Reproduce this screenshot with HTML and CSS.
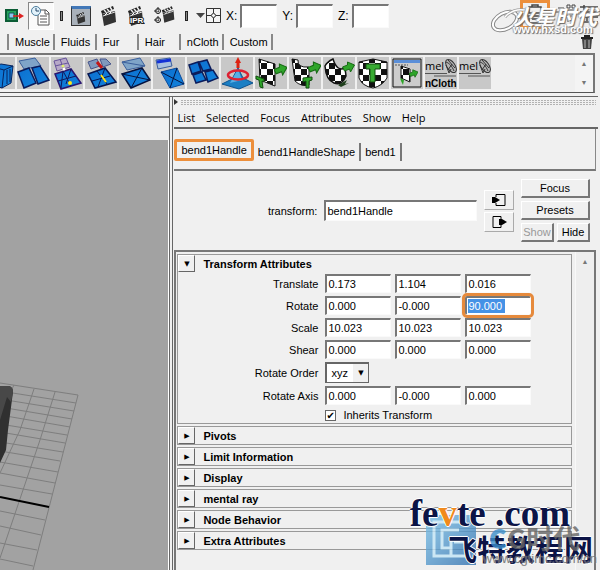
FILE: index.html
```html
<!DOCTYPE html>
<html lang="en">
<head>
	<meta charset="utf-8">
	<title>Attribute Editor</title>

	<link rel="stylesheet" href="styles.css">
</head>
<body>

	<!-- Shared icon parts -->
	<svg class="defs" width="0" height="0" aria-hidden="true">
		<defs>
			<linearGradient id="blue" x1="0" y1="0" x2="1" y2="1">
				<stop offset="0" stop-color="#0c6fd0"/>
				<stop offset="1" stop-color="#1283dc"/>
			</linearGradient>
			<linearGradient id="logo-blue" x1="0" y1="0" x2="1" y2="1">
				<stop offset="0" stop-color="#7fc4ea"/>
				<stop offset="1" stop-color="#2f6fae"/>
			</linearGradient>
			<pattern id="check" width="12" height="12" patternUnits="userSpaceOnUse">
				<rect width="12" height="12" fill="#fff"/>
				<path d="M0 0h6v6H0zM6 6h6v6H6z" fill="#111"/>
			</pattern>
			<symbol id="clapper" viewBox="0 0 18 20">
				<path d="M2 8l13-3 1 11-12 4z" fill="#333"/>
				<path d="M1 5L13 0l1 3L2 8z" fill="#222"/>
				<path d="M4 4l2 2M7 3l2 2M10 1l2 3" stroke="#eee" stroke-width="1.5"/>
				<path d="M3 10l12-4" stroke="#ddd"/>
				<path d="M5 9l2-2M9 8l2-2" stroke="#fff"/>
			</symbol>
			<symbol id="green-arrow" viewBox="0 0 12 12">
				<path d="M0 6l5-2V1l7 3-4 7-1-3-5 2z" fill="#2fa52a" stroke="#176a14"/>
			</symbol>
			<symbol id="mel" viewBox="0 0 32 32">
				<path d="M0 16.5h22M9 19h22" stroke="#555"/>
				<ellipse cx="26" cy="9" rx="4" ry="7.500" transform="rotate(-35 26 9)" fill="#b5b5b5" stroke="#333"/>
				<path d="M21 5c3 1 6 4 8 9M23 3c2 3 5 5 7 8M23 13l4-6M21 8l3 8 2-4" fill="none" stroke="#333"/>
			</symbol>
		</defs>
	</svg>

	<header class="toolbar">
		<button class="tool" aria-label="Output connections">
			<svg width="20" height="16" viewBox="0 0 20 16"><path d="M1 2h11v11H1z" fill="#24a35d" stroke="#0b5c35" stroke-width="2"/><path d="M4 5h5v5H4z" fill="#8cc6ef" stroke="#155"/><path d="M8 8h8" stroke="#d22" stroke-width="1.500"/><path d="M14 5l5 3-5 3z" fill="#d22"/></svg>
		</button>
		<button class="tool tool-pressed" aria-label="Construction history">
			<svg width="20" height="22" viewBox="0 0 20 22"><path d="M7 5h8l3 3v12H7z" fill="#fff" stroke="#555"/><path d="M14 5v4h4M9 11h7M9 14h7M9 17h7" fill="none" stroke="#555"/><circle cx="5" cy="6" r="4.500" fill="#e2f2fb" stroke="#4c7c9c"/><path d="M5 3v3h3" fill="none" stroke="#246"/></svg>
		</button>
		<span class="grip"></span>
		<button class="tool tool-framed" aria-label="Render view">
			<svg width="16" height="14"><use href="#clapper"/></svg>
		</button>
		<button class="tool" aria-label="Render">
			<svg width="18" height="20"><use href="#clapper"/></svg>
		</button>
		<button class="tool" aria-label="IPR render">
			<svg width="18" height="20" viewBox="0 0 18 20"><use href="#clapper"/><text x="3" y="17" class="ipr">IPR</text></svg>
		</button>
		<button class="tool" aria-label="Render settings">
			<svg width="22" height="20" viewBox="0 0 22 20"><use href="#clapper" x="7" width="15" height="17"/><circle cx="4" cy="5" r="2.500" fill="#ddd" stroke="#222"/><circle cx="4" cy="14" r="2.500" fill="#ddd" stroke="#222"/><path d="M4 1v8M0 5h8M4 10v8M0 14h8" stroke="#222" stroke-dasharray="1 1"/></svg>
		</button>
		<span class="grip"></span>
		<button class="tool tool-field" aria-label="Input field mode">
			<svg width="26" height="18" viewBox="0 0 26 18"><path d="M0 6h9l-4.500 5z" fill="#444"/><path d="M10.500 1.500h14v14h-14z" fill="#f4f4f4" stroke="#333"/><path d="M17.500 1v5M17.500 11v5M10 8.500h5M20 8.500h5" stroke="#333"/><circle cx="17.500" cy="8.500" r="2" fill="none" stroke="#333"/></svg>
		</button>
		<label class="coord">X: <input type="text"></label>
		<label class="coord">Y: <input type="text"></label>
		<label class="coord">Z: <input type="text"></label>
		<div class="panel-toggles">
			<button class="toggle toggle-marked" aria-label="Attribute editor">
				<svg width="24" height="22" viewBox="0 0 24 22"><path d="M0 6h6M18 6h6M6 3h12v6H6zM9 3V1h6v2M3 12h18M6 12v7h12M9 15h9" fill="none" stroke="#444" stroke-width="1.500"/></svg>
			</button>
			<button class="toggle" aria-label="Tool settings">
				<svg width="22" height="20" viewBox="0 0 22 20"><path d="M0 8h9M4 4h6v4M13 1h3v3h-3zM18 1h3v3h-3zM13 6h8M4 12h14M8 15v4M14 11v7" fill="none" stroke="#444"/></svg>
			</button>
			<button class="toggle" aria-label="Channel box">
				<svg width="18" height="20" viewBox="0 0 18 20"><path d="M0 3h18M4 1v5M0 8h18M12 6v5M2 13h16M7 11v6M3 18h15" fill="none" stroke="#444" stroke-width="1.500"/></svg>
			</button>
		</div>
		<!-- Studio stamp -->
		<div class="stamp-top">
			<svg width="36" height="26" viewBox="0 0 36 26"><ellipse cx="14" cy="14" rx="13" ry="8" transform="rotate(-28 14 14)" fill="none" stroke="#888" stroke-width="4"/><ellipse cx="14" cy="14" rx="13" ry="8" transform="rotate(-28 14 14)" fill="none" stroke="#fff" stroke-width="2"/><path d="M14 10Q22 1 34 3" fill="none" stroke="#999" stroke-width="3"/><path d="M14 10Q22 1 34 3" fill="none" stroke="#fff" stroke-width="1.500"/></svg>
			<div class="stamp-text">
				<span class="stamp-name" lang="zh">火星时代</span>
				<span class="stamp-url">www.hxsd.com</span>
			</div>
		</div>
	</header>

	<nav class="shelf-tabs">
		<button class="shelf-tab shelf-tab-cut" aria-label="Previous shelf"></button>
		<button class="shelf-tab">Muscle</button>
		<button class="shelf-tab">Fluids</button>
		<button class="shelf-tab">Fur</button>
		<button class="shelf-tab">Hair</button>
		<button class="shelf-tab">nCloth</button>
		<button class="shelf-tab">Custom</button>
		<button class="trash" aria-label="Delete shelf item">
			<svg width="14" height="16" viewBox="0 0 14 16"><path d="M2 5h10l-1 10H3z" fill="#444"/><path d="M1 3h12v2H1zM4 1h6v2H4z" fill="#222"/><path d="M5 6v8M9 6v8" stroke="#bbb"/></svg>
		</button>
	</nav>

	<section class="shelf">
		<div class="shelf-items">
			<button class="shelf-item" aria-label="Cube">
				<svg viewBox="0 0 32 32"><path d="M10 10l8-3 12 2-2 17-9 5-9-3z" fill="url(#blue)" stroke="#06235e"/><path d="M10 10l11 3 9-4M21 13l-2 18M13 15v12M16 15v13M24 13v14M27 12v13" fill="none" stroke="#06235e"/></svg>
			</button>
			<button class="shelf-item" aria-label="Planar">
				<svg viewBox="0 0 32 32"><path d="M2 4l16-3 6 8-17 3z" fill="#7fa4c8" stroke="#3b5f9b"/><path d="M1 15l11-4 7 15-12 5z" fill="url(#blue)" stroke="#0a1c5c" stroke-width="1.500"/><path d="M15 11l8-2 9 14-11 4z" fill="url(#blue)" stroke="#0a1c5c" stroke-width="1.500"/></svg>
			</button>
			<button class="shelf-item" aria-label="Merge vertices">
				<svg viewBox="0 0 32 32"><path d="M3 4l12-3 4 9-13 4zM9 2l4 11M4 9l13-3" fill="#b7a9c8" stroke="#67539a"/><path d="M4 17l16-5 10 14-20 6z" fill="url(#blue)" stroke="#2b1670" stroke-width="1.500"/><path d="M12 14l8 15M7 24l18-5M12 14l-2 17M20 12l-5 15" stroke="#10195c"/><circle cx="12" cy="9" r="1.500" fill="#dff06d"/><circle cx="13" cy="12" r="1.500" fill="#fff"/><circle cx="19" cy="26" r="2" fill="#ffe51a"/></svg>
			</button>
			<button class="shelf-item" aria-label="Sew edges">
				<svg viewBox="0 0 32 32"><path d="M3 5l9-3 3 7-9 3zM15 2l6 0 5 5-8 3z" fill="#8099bd" stroke="#48568c"/><path d="M12 5l5 6" stroke="#c31616" stroke-width="3"/><path d="M3 17l17-6 11 14-21 6z" fill="url(#blue)" stroke="#07164f" stroke-width="1.500"/><path d="M12 14l10 13M7 24l18-5M20 11l-7 19" stroke="#07164f"/><path d="M16 18l5 7" stroke="#ffe51a" stroke-width="2"/></svg>
			</button>
			<button class="shelf-item" aria-label="Split polygon">
				<svg viewBox="0 0 32 32"><path d="M3 5l18-4 5 8-18 4zM3 5l23 4" fill="#7fa4c8" stroke="#3b5f9b"/><path d="M3 17l20-6 8 12-19 8z" fill="url(#blue)" stroke="#06133f" stroke-width="1.500"/><path d="M3 17l28 6M23 11L12 31" stroke="#06133f"/></svg>
			</button>
			<button class="shelf-item" aria-label="Extrude">
				<svg viewBox="0 0 32 32"><path d="M3 3l14-2 2 8-14 3z" fill="#a9c0e0" stroke="#3b5f9b"/><path d="M4 5l14-2" stroke="#1431d6" stroke-width="3"/><path d="M8 15l16-4 7 16-14 4z" fill="url(#blue)" stroke="#0b4a9c"/><path d="M8 15l23 12M24 11l-7 20" stroke="#06133f"/></svg>
			</button>
			<button class="shelf-item" aria-label="Detach">
				<svg viewBox="0 0 32 32"><path d="M2 8l9-3 3 9-9 3zM12 5l8-2 4 9-8 2zM6 18l9-3 4 8-10 3zM18 15l8-2 5 8-10 4z" fill="url(#blue)" stroke="#0a1c5c" stroke-width="1.500"/></svg>
			</button>
			<button class="shelf-item" aria-label="Soft modification">
				<svg viewBox="0 0 32 32"><path d="M1 27l10-5 6-11 5 10 10 5-14 6z" fill="#1b7fc4" stroke="#0f548f"/><path d="M9 26l8-14 4 11z" fill="#55aee5"/><ellipse cx="17" cy="18" rx="10" ry="4.500" fill="none" stroke="#dd2032" stroke-width="2.500"/><path d="M17 11V5" stroke="#d21" stroke-width="3"/><path d="M17 0l-3 6h6z" fill="#d21"/></svg>
			</button>
			<button class="shelf-item" aria-label="Planar mapping">
				<svg viewBox="0 0 32 32"><path d="M4 2l16 5v22L5 23z" fill="url(#check)" stroke="#111"/><use href="#green-arrow" x="19" y="6" width="13" height="13"/><path d="M1 19l8 3v3l-2-1 1 7-3-1-1-7-3-1z" fill="#2fa52a" stroke="#124f10"/></svg>
			</button>
			<button class="shelf-item" aria-label="Cylindrical mapping">
				<svg viewBox="0 0 32 32"><path d="M3 2l6 1q-1 8 11 7v18q-8 2-14-4z" fill="url(#check)" stroke="#111"/><use href="#green-arrow" x="19" y="4" width="13" height="13"/><path d="M14 21l9-1v3l-3 1v7h-3v-7l-3 1z" fill="#2fa52a" stroke="#124f10"/></svg>
			</button>
			<button class="shelf-item" aria-label="Spherical mapping">
				<svg viewBox="0 0 32 32"><path d="M10 2Q4 5 2 9q1 14 9 17 8 3 12-7l-1-8q-8 4-12-9z" fill="url(#check)" stroke="#111" stroke-width="1.500"/><use href="#green-arrow" x="19" y="4" width="13" height="12"/><path d="M15 28l9-5-2 4 4-1-8 4z" fill="#1f3f1c"/></svg>
			</button>
			<button class="shelf-item" aria-label="Automatic mapping">
				<svg viewBox="0 0 32 32"><path d="M2 5l14-3 14 3v16q-5 8-14 10Q5 29 2 21z" fill="url(#check)" stroke="#111"/><path d="M9 7h14v5h-5v13h-5V12H9z" fill="#38ab32" stroke="#124f10"/></svg>
			</button>
			<button class="shelf-item" aria-label="UV texture editor">
				<svg viewBox="0 0 32 32"><path d="M2 2h28v28H2z" fill="#ccc" stroke="#111"/><path d="M3 3h26v3H3z" fill="#5b8fd8"/><path d="M4 8h13" stroke="#555" stroke-dasharray="2 1"/><path d="M10 9l9 3v13l-9-4z" fill="url(#check)" stroke="#111"/><use href="#green-arrow" x="18" y="12" width="9" height="9"/><path d="M9 21l4 2-1 5-2-4z" fill="#2fa52a"/></svg>
			</button>
			<button class="shelf-item" aria-label="MEL script nCloth">
				<svg viewBox="0 0 32 32"><use href="#mel"/><text x="0" y="13" class="mel">mel</text><text x="0" y="30" class="mel-name">nCloth</text></svg>
			</button>
			<button class="shelf-item" aria-label="MEL script">
				<svg viewBox="0 0 32 32"><use href="#mel"/><text x="0" y="13" class="mel">mel</text></svg>
			</button>
		</div>
		<div class="shelf-scroll">
			<button aria-label="Scroll shelf up">▲</button>
			<button aria-label="Scroll shelf down">▼</button>
		</div>
	</section>

	<main class="workspace">
		<section class="view">
			<div class="view-bar"></div>
			<div class="view-head"></div>
			<svg class="scene" viewBox="0 140 169 430" preserveAspectRatio="xMinYMax slice">
				<g fill="none" stroke="#7e7e7e">
					<path d="M78 395L33 570M55 392L40 440 23 490 0 558M34 389L20 430 0 473M14 385l-4 8"/>
					<path d="M78 395L0 383M76 403L0 391M74 411L0 399M72 419L0 407M70 427L0 415M67 435L0 424M65 443L0 432M63 452L0 442M60 461L0 451M58 472L0 462M55 483L0 473M52 494L0 485M45 520L0 511M41 535L0 526M37 550L0 543M33 566L0 559"/>
				</g>
				<path d="M0 497l49 10" stroke="#000" stroke-width="2"/>
				<path d="M0 386h9q4 1 4 6L8 430l-2 20-6 13z" fill="#303030"/>
				<path d="M0 386h9q4 1 4 6l-2 10-4-5-7 23z" fill="#484848"/>
			</svg>
		</section>

		<section class="editor">
			<div class="drag-bar"><span class="dots"></span></div>
			<nav class="menu">
				<button>List</button>
				<button>Selected</button>
				<button>Focus</button>
				<button>Attributes</button>
				<button>Show</button>
				<button>Help</button>
			</nav>

			<div class="node-tabs">
				<button class="node-tab node-tab-current">bend1Handle</button>
				<button class="node-tab">bend1HandleShape</button>
				<button class="node-tab">bend1</button>
			</div>

			<div class="node-head">
				<label for="node">transform:</label>
				<input type="text" id="node" value="bend1Handle">
				<div class="io">
					<button aria-label="Go to input">
						<svg width="16" height="14" viewBox="0 0 16 14"><path d="M5 4V1.500h9v11H5V10" fill="none" stroke="#000"/><path d="M1 4h3l5 3-5 3H1z"/></svg>
					</button>
					<button aria-label="Go to output">
						<svg width="16" height="14" viewBox="0 0 16 14"><path d="M10 4V1.500H2v11h8V10" fill="none" stroke="#000"/><path d="M8 4h3l5 3-5 3H8z"/></svg>
					</button>
				</div>
				<div class="actions">
					<button class="wide">Focus</button>
					<button class="wide">Presets</button>
					<button disabled>Show</button>
					<button>Hide</button>
				</div>
			</div>

			<div class="frame">
				<div class="sections">
					<section class="group group-open">
						<h2><button aria-label="Collapse">▼</button>Transform Attributes</h2>
						<div class="fields">
							<label for="tx">Translate</label>
							<input type="text" id="tx" value="0.173">
							<input type="text" aria-label="Translate Y" value="1.104">
							<input type="text" aria-label="Translate Z" value="0.016">

							<label for="rx">Rotate</label>
							<input type="text" id="rx" value="0.000">
							<input type="text" aria-label="Rotate Y" value="-0.000">
							<input type="text" class="marked" aria-label="Rotate Z" value="90.000">

							<label for="sx">Scale</label>
							<input type="text" id="sx" value="10.023">
							<input type="text" aria-label="Scale Y" value="10.023">
							<input type="text" aria-label="Scale Z" value="10.023">

							<label for="shx">Shear</label>
							<input type="text" id="shx" value="0.000">
							<input type="text" aria-label="Shear XZ" value="0.000">
							<input type="text" aria-label="Shear YZ" value="0.000">

							<label for="order">Rotate Order</label>
							<div class="pick">
								<select id="order">
									<option>xyz</option>
									<option>yzx</option>
									<option>zxy</option>
								</select>
								<span class="pick-arrow">▼</span>
							</div>

							<label for="ax">Rotate Axis</label>
							<input type="text" id="ax" value="0.000">
							<input type="text" aria-label="Rotate Axis Y" value="-0.000">
							<input type="text" aria-label="Rotate Axis Z" value="0.000">

							<label class="inherit"><input type="checkbox" checked>Inherits Transform</label>
						</div>
					</section>
					<section class="group"><h2><button aria-label="Expand">▶</button>Pivots</h2></section>
					<section class="group"><h2><button aria-label="Expand">▶</button>Limit Information</h2></section>
					<section class="group"><h2><button aria-label="Expand">▶</button>Display</h2></section>
					<section class="group"><h2><button aria-label="Expand">▶</button>mental ray</h2></section>
					<section class="group"><h2><button aria-label="Expand">▶</button>Node Behavior</h2></section>
					<section class="group"><h2><button aria-label="Expand">▶</button>Extra Attributes</h2></section>
				</div>
				<div class="scrollbar"><button aria-label="Scroll up">▲</button></div>
			</div>
		</section>
	</main>

	<!-- Site stamps over the lower right corner -->
	<svg class="stamp-logo" width="52" height="52" viewBox="0 0 52 52"><path d="M1 1h50v50H1z" fill="url(#logo-blue)"/><path d="M41 8H9v34h33V28H29M34 16H17v18h9M26 22v20" fill="none" stroke="#c4e5f6" stroke-width="3"/></svg>
	<div class="stamp-fevte">fe<span>v</span>te .com</div>
	<div class="stamp-site" lang="zh">飞特教程网</div>
	<div class="stamp-cg">
		<span class="cg-name" lang="zh"><b>C</b>G时代</span>
		<span class="cg-url">www.cgtimc.com/cn</span>
	</div>

</body>
</html>
```
FILE: styles.css
```css
* {
	box-sizing: border-box;
}

body {
	margin: 0;
	min-height: 100vh;
	display: flex;
	flex-direction: column;
	position: relative;
	overflow: hidden;
	background: #f0f0f0;
	color: #000;
	font: 11px/14px "Liberation Sans", sans-serif;
}

button,
input,
select {
	margin: 0;
	padding: 0;
	border: 0;
	background: none;
	color: inherit;
	font: inherit;
}

input[type="text"] {
	min-width: 0;
	padding: 0 1px;
	border: 1px solid #fafafa;
	border-top: 2px solid #777;
	border-left: 2px solid #777;
	background: #fff;
}

svg {
	display: block;
	flex: none;
}

.defs {
	position: absolute;
}

/* Status line */
.toolbar {
	display: flex;
	align-items: center;
	height: 31px;
	padding: 0 2px 0 5px;
	position: relative;
}

.tool {
	margin-right: 9px;
}

.tool:first-child {
	margin-right: 3px;
}

.tool-pressed {
	padding: 2px;
	margin-right: 6px;
	border: 1px solid #fff;
	border-top-color: #888;
	border-left-color: #888;
	background: #fafafa;
}

.tool-framed {
	width: 20px;
	height: 20px;
	padding: 3px 1px 1px;
	border: 1px solid #333;
	border-top: 3px solid #4278b8;
	background: #a9b1ba;
}

.tool-framed svg {
	height: 12px;
}

.tool-field {
	margin-right: 4px;
}

.grip {
	width: 3px;
	height: 10px;
	margin-right: 8px;
	border: 1px solid #222;
	background: #888;
}

.coord {
	display: flex;
	align-items: center;
	gap: 3px;
	margin-right: 5px;
	font-size: 12px;
}

.coord input {
	width: 37px;
	height: 24px;
}

.panel-toggles {
	display: flex;
	align-items: flex-start;
	align-self: flex-start;
	gap: 4px;
	height: 28px;
	margin-left: auto;
}

.toggle {
	padding-top: 4px;
}

.toggle-marked {
	height: 29px;
	padding: 1px 0;
	border: 3px solid #ec8f3c;
}

.ipr {
	fill: #fff;
	stroke: #222;
	stroke-width: 2px;
	paint-order: stroke;
	font: bold 8px "Liberation Sans", sans-serif;
}

.stamp-top {
	display: flex;
	position: absolute;
	top: 7px;
	right: 3px;
	color: #fff;
	pointer-events: none;
}

.stamp-text {
	display: flex;
	flex-direction: column;
	margin-left: -14px;
	text-shadow: 1px 1px 1px #666, -1px 0 1px #aaa;
}

.stamp-name {
	font: italic bold 21px/18px "Noto Sans CJK SC", sans-serif;
}

.stamp-url {
	font: bold 11px/9px "Liberation Sans", sans-serif;
}

/* Shelf */
.shelf-tabs {
	display: flex;
	align-items: center;
	height: 22px;
	padding-right: 6px;
}

.shelf-tab {
	min-width: 42px;
	height: 16px;
	padding: 0 3px 0 6px;
	border-right: 2px solid #888;
	text-align: left;
}

.shelf-tab-cut {
	min-width: 9px;
	padding: 0;
}

.trash {
	margin-left: auto;
}

.shelf {
	display: flex;
	height: 40px;
	margin-right: 5px;
	border: 2px solid #777;
	border-left: 0;
	border-bottom: 1px solid #555;
}

.shelf-items {
	display: flex;
	flex: 1;
	gap: 2px;
	padding-top: 2px;
	overflow: hidden;
}

.shelf-item {
	flex: none;
	width: 32px;
	height: 32px;
	background: #c8c8c8;
}

.shelf-item svg {
	overflow: visible;
}

.shelf-item:first-child {
	margin-left: -17px;
}

.mel {
	font: 11px "Open Sans", sans-serif;
}

.mel-name {
	font: bold 10px "Liberation Sans", sans-serif;
}

.shelf-scroll {
	display: flex;
	flex-direction: column;
	justify-content: space-around;
	width: 18px;
	background: #f4f4f4;
	color: #777;
	font-size: 7px;
}

/* Viewport and attribute editor */
.workspace {
	flex: 1;
	display: grid;
	grid-template-columns: 29% 1fr;
	margin: 3px 2px 0 0;
	border-top: 1px solid #666;
}

.view {
	display: flex;
	flex-direction: column;
	border-right: 4px double #666;
}

.view-bar {
	height: 21px;
	border-bottom: 2px solid #777;
}

.view-head {
	height: 22px;
}

.scene {
	flex: 1;
	min-height: 0;
	width: 100%;
	border-right: 1px solid #fff;
	background: #a2a2a2;
}

.editor {
	display: flex;
	flex-direction: column;
	min-width: 0;
	padding-left: 1px;
}

.drag-bar {
	display: flex;
	align-items: center;
	gap: 2px;
	height: 10px;
	padding-right: 2px;
}

.drag-bar::before {
	content: "";
	border: 3px solid transparent;
	border-left: 4px solid #333;
	border-right: 0;
}

.dots {
	flex: 1;
	height: 5px;
	background: conic-gradient(#888 25%, transparent 0) 0 0 / 3px 2px;
	opacity: .6;
}

.menu {
	display: flex;
	gap: 11px;
	height: 22px;
	padding-left: 3px;
	border-bottom: 2px solid #666;
	font: 11px/22px "Open Sans", sans-serif;
}

.node-tabs {
	display: flex;
	align-items: flex-end;
	height: 42px;
	margin-right: 2px;
	padding-bottom: 8px;
	border-right: 1px solid #888;
	border-bottom: 2px solid #777;
}

.node-tab {
	height: 18px;
	padding: 0 4px;
	border-right: 2px solid #777;
}

.node-tab-current {
	height: 22px;
	border: 3px solid #ec8f3c;
	border-radius: 2px;
}

.node-head {
	display: grid;
	grid-template-columns: 143px 1fr 30px 69px;
	column-gap: 7px;
	align-items: center;
	height: 79px;
	padding-right: 8px;
}

.node-head label {
	text-align: right;
}

.node-head input {
	height: 21px;
}

.io,
.actions {
	display: grid;
	gap: 2px;
}

.io button {
	display: grid;
	place-items: center;
	height: 20px;
	border: 1px solid #aaa;
	border-top-color: #fff;
	border-left-color: #fff;
}

.actions {
	grid-template-columns: 1fr 1fr;
	gap: 3px;
}

.actions button {
	height: 19px;
	border: 1px solid #fff;
	border-right: 2px solid #777;
	border-bottom: 2px solid #777;
}

.actions button:disabled {
	color: #999;
}

.actions .wide {
	grid-column: span 2;
}

.frame {
	flex: 1;
	display: flex;
	margin-right: 2px;
	border: 2px solid #777;
	border-bottom: 0;
}

.sections {
	flex: 1;
	padding: 2px 3px 0 1px;
}

.group {
	height: 19px;
	margin-bottom: 2px;
	border: 1px solid #999;
	background: #f0f0f0;
}

.group-open {
	height: auto;
}

.group h2 {
	display: flex;
	align-items: center;
	gap: 8px;
	height: 17px;
	margin: 0;
	font-size: 11px;
}

.group h2 button {
	width: 17px;
	height: 17px;
	border: 1px solid #fff;
	border-right-color: #666;
	border-bottom-color: #666;
	font: 7px/14px "DejaVu Sans", sans-serif;
}

.fields {
	display: grid;
	grid-template-columns: 143px repeat(3, 66px);
	gap: 3px 4px;
	align-items: center;
	padding: 2px 0 1px;
}

.fields > label {
	padding-right: 3px;
	text-align: right;
}

.fields input[type="text"] {
	height: 19px;
}

.fields .marked {
	background: linear-gradient(#4592e6, #4592e6) 1px 1px / 37px 14px no-repeat #fff;
	color: #fff;
	outline: 3px solid #e68a3c;
	border-radius: 2px;
}

.pick {
	display: grid;
	grid-template-columns: 1fr 16px;
	grid-column: 2 / -1;
	width: 44px;
	height: 21px;
	border: 1px solid #666;
	border-top-width: 2px;
	border-left-width: 2px;
	background: #fff;
}

.pick select {
	grid-area: 1 / 1 / 2 / 3;
	padding-left: 4px;
	appearance: none;
}

.pick-arrow {
	grid-area: 1 / 2;
	border-left: 1px solid #fff;
	background: #f0f0f0;
	font: 7px/18px "DejaVu Sans", sans-serif;
	text-align: center;
	pointer-events: none;
}

.fields .inherit {
	display: flex;
	align-items: center;
	gap: 7px;
	grid-column: 2 / -1;
	height: 14px;
}

.inherit input {
	appearance: none;
	width: 11px;
	height: 11px;
	border: 1px solid #666;
	background: #fff;
}

.inherit input:checked::before {
	content: "✔";
	display: block;
	font: 10px/9px "DejaVu Sans", sans-serif;
}

.scrollbar {
	width: 19px;
	padding-top: 3px;
	border-left: 1px solid #f8f8f8;
	background: #eee;
	color: #777;
	font-size: 7px;
	text-align: center;
}

/* Stamps */
.stamp-logo {
	position: absolute;
	right: 123px;
	bottom: 4px;
	opacity: .8;
}

.stamp-fevte {
	position: absolute;
	right: 30px;
	bottom: 37px;
	color: #0c1446;
	font: bold 37px/38px "Liberation Serif", serif;
	text-shadow: 1px 0 #fff, -1px 0 #fff, 0 1px #fff, 0 -1px #fff;
}

.stamp-fevte span {
	color: #f08a1c;
}

.stamp-site {
	position: absolute;
	right: 7px;
	bottom: 6px;
	color: #0c1446;
	font: bold 29px/32px "Noto Sans CJK SC", sans-serif;
	text-shadow: 1px 0 #fff, -1px 0 #fff, 0 1px #fff, 0 -1px #fff;
}

.stamp-cg {
	display: flex;
	flex-direction: column;
	position: absolute;
	right: 3px;
	bottom: 4px;
	color: #666;
	opacity: .8;
}

.cg-name {
	padding-left: 6px;
	font: bold 27px/28px "Noto Sans CJK SC", sans-serif;
}

.cg-name b {
	color: #3d8fcb;
}

.cg-url {
	font: 13px/14px "Liberation Sans", sans-serif;
	text-shadow: 0 0 1px #ddd;
}
```
